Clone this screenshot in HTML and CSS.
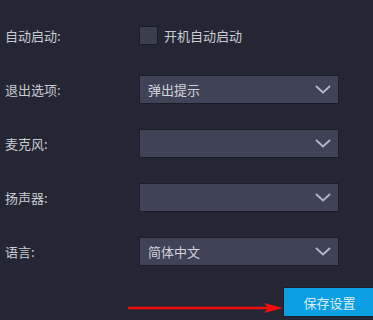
FILE: index.html
```html
<!DOCTYPE html>
<html lang="zh-CN">

<head>
    <meta charset="UTF-8">
    <meta name="viewport" content="width=device-width, initial-scale=1.0">
    <title>设置</title>

    <link rel="stylesheet" href="styles.css">
</head>

<body>

    <div class="settings">
        <div class="row">
            <div class="label">自动启动:</div>
            <label class="check">
                <span class="box"></span>
                <span>开机自动启动</span>
            </label>
        </div>

        <div class="row">
            <div class="label">退出选项:</div>
            <div class="select">
                <span>弹出提示</span>
                <svg class="arrow" width="16" height="9" viewBox="0 0 16 9"><path d="M1 1 L8 7.5 L15 1" fill="none" stroke="#b4b8c8" stroke-width="1.8"/></svg>
            </div>
        </div>

        <div class="row">
            <div class="label">麦克风:</div>
            <div class="select">
                <span></span>
                <svg class="arrow" width="16" height="9" viewBox="0 0 16 9"><path d="M1 1 L8 7.5 L15 1" fill="none" stroke="#b4b8c8" stroke-width="1.8"/></svg>
            </div>
        </div>

        <div class="row">
            <div class="label">扬声器:</div>
            <div class="select">
                <span></span>
                <svg class="arrow" width="16" height="9" viewBox="0 0 16 9"><path d="M1 1 L8 7.5 L15 1" fill="none" stroke="#b4b8c8" stroke-width="1.8"/></svg>
            </div>
        </div>

        <div class="row">
            <div class="label">语言:</div>
            <div class="select">
                <span>简体中文</span>
                <svg class="arrow" width="16" height="9" viewBox="0 0 16 9"><path d="M1 1 L8 7.5 L15 1" fill="none" stroke="#b4b8c8" stroke-width="1.8"/></svg>
            </div>
        </div>

        <div class="footer">
            <svg class="pointer" width="155" height="12" viewBox="0 0 155 12">
                <line x1="0" y1="6" x2="140" y2="6" stroke="#f20d0d" stroke-width="2.4"/>
                <path d="M136 1 L155 6 L136 11 L140 6 Z" fill="#f20d0d"/>
            </svg>
            <button class="save">保存设置</button>
        </div>
    </div>

</body>

</html>
```

FILE: styles.css
```css
body {
    margin: 0;
    padding: 0;
    background: #242733;
    font-family: 'Noto Sans CJK SC', 'Noto Sans', sans-serif;
    font-size: 13px;
    color: #c9cbd3;
    overflow: hidden;
}

.settings {
    padding: 8px 0 0 5px;
}

.row {
    display: flex;
    align-items: center;
    height: 54px;
}

.label {
    width: 134px;
}

/* checkbox */
.check {
    display: flex;
    align-items: center;
    gap: 6px;
}

.box {
    width: 17px;
    height: 17px;
    background: #3b3e4b;
    border: 1px solid #1a1c24;
}

/* dropdowns */
.select {
    display: flex;
    align-items: center;
    justify-content: space-between;
    width: 183px;
    height: 27px;
    padding: 0 7px 0 8px;
    background: #3f4355;
    border: 1px solid #1c1e27;
    color: #d2d4dc;
}

.arrow {
    display: block;
}

/* bottom bar */
.footer {
    display: flex;
    justify-content: flex-end;
    align-items: center;
    margin-top: 9px;
    margin-right: -3px;
}

.pointer {
    display: block;
    margin-top: 12px;
}

.save {
    width: 93px;
    height: 30px;
    padding: 0;
    background: #0a9fe2;
    border: 1px solid #16202c;
    color: #dcebf6;
    font-family: inherit;
    font-size: 13px;
}
```
